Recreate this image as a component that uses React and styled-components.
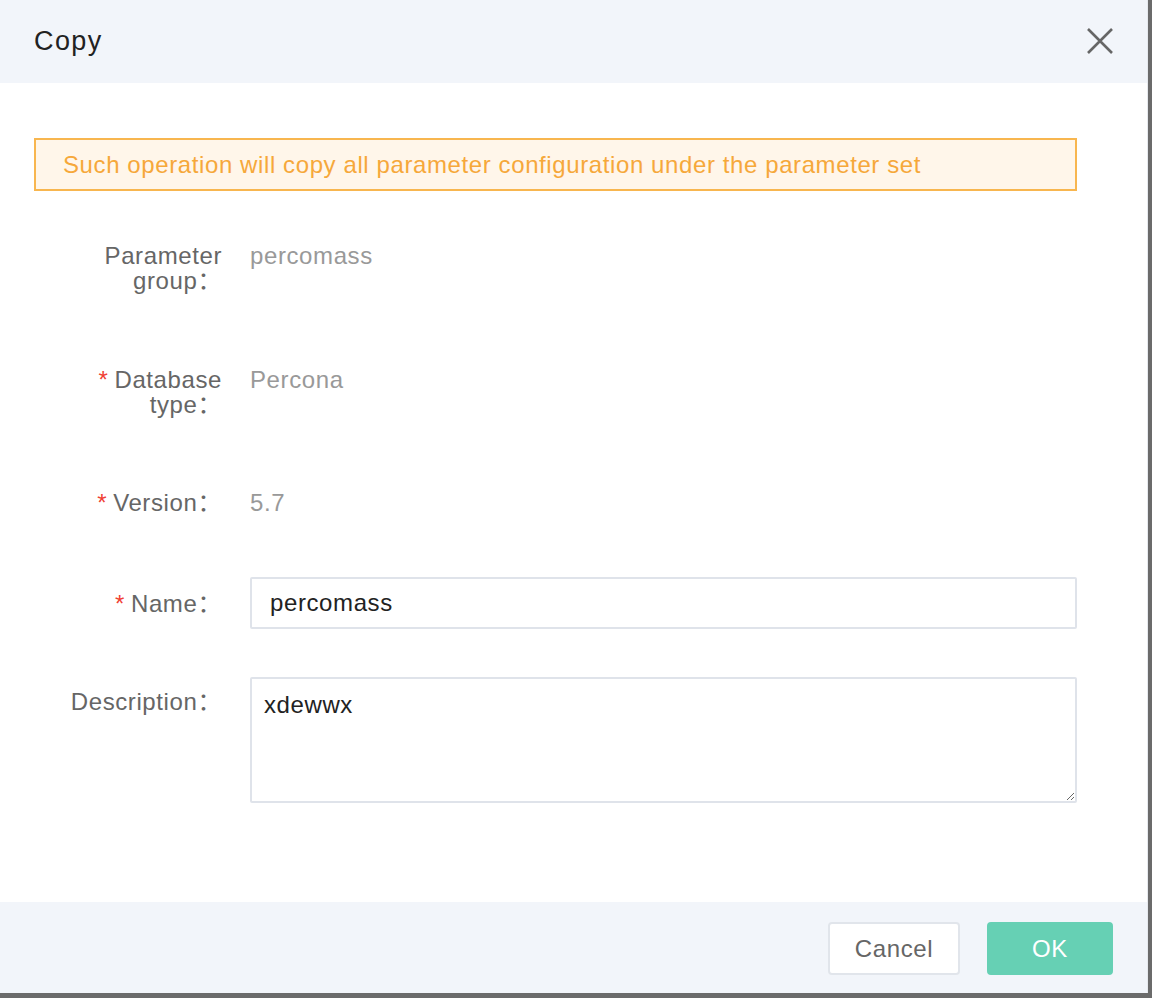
import styled, { createGlobalStyle } from 'styled-components';

const GlobalStyle = createGlobalStyle`
  html, body {
    margin: 0;
    padding: 0;
    background: #6b6b6b;
  }
  body {
    font-family: "Liberation Sans", Arial, "Noto Sans CJK SC", sans-serif;
  }
`;

const Dialog = styled.div`
  width: 1148px;
  height: 993px;
  background: #fff;
  display: flex;
  flex-direction: column;
  box-sizing: border-box;
  border-right: 1px solid #e6e9ee;
`;

const Header = styled.div`
  height: 83px;
  flex-shrink: 0;
  background: #f2f5fa;
  display: flex;
  align-items: center;
  justify-content: space-between;
  padding: 0 30px 0 34px;
  box-sizing: border-box;
`;

const Title = styled.h2`
  margin: 0;
  font-size: 27px;
  font-weight: 400;
  color: #222;
  letter-spacing: 1.4px;
`;

const CloseButton = styled.button`
  background: none;
  border: none;
  padding: 0;
  width: 34px;
  height: 34px;
  display: flex;
  align-items: center;
  justify-content: center;
  cursor: pointer;
  margin-top: -2px;
`;

const Body = styled.div`
  flex: 1;
  padding: 55px 70px 0 34px;
  font-size: 24px;
  letter-spacing: 0.6px;
`;

const Alert = styled.div`
  height: 53px;
  box-sizing: border-box;
  border: 2px solid #f8b64f;
  background: #fff6ea;
  color: #f6a83a;
  display: flex;
  align-items: center;
  padding: 0 27px;
  margin-bottom: 52px;
`;

const Row = styled.div`
  display: flex;
  align-items: ${p => (p.$center ? 'center' : 'flex-start')};
  margin-bottom: ${p => p.$gap}px;
  min-height: ${p => p.$h || 25}px;
`;

const Label = styled.div`
  width: 160px;
  flex-shrink: 0;
  text-align: right;
  line-height: 25px;
  color: #666;
  margin: 0 28px;
  padding-top: ${p => p.$top || 0}px;
`;

const Star = styled.span`
  color: #f04134;
  margin-right: 6px;
`;

const Value = styled.div`
  line-height: 25px;
  color: #999;
`;

const Input = styled.input`
  flex: 1;
  height: 52px;
  box-sizing: border-box;
  border: 2px solid #dfe3ea;
  border-radius: 2px;
  padding: 0 18px;
  font-family: inherit;
  font-size: 24px;
  letter-spacing: 0.6px;
  color: #222;
  outline: none;
`;

const TextArea = styled.textarea`
  flex: 1;
  height: 126px;
  box-sizing: border-box;
  border: 2px solid #dfe3ea;
  border-radius: 2px;
  padding: 12px 12px;
  font-family: inherit;
  font-size: 24px;
  letter-spacing: 0.6px;
  line-height: 28px;
  color: #222;
  outline: none;
  resize: vertical;
`;

const Footer = styled.div`
  height: 91px;
  flex-shrink: 0;
  background: #f2f5fa;
  display: flex;
  justify-content: flex-end;
  align-items: flex-start;
  gap: 27px;
  padding: 20px 34px 0 0;
  box-sizing: border-box;
`;

const Button = styled.button`
  height: 53px;
  width: ${p => p.$w}px;
  box-sizing: border-box;
  border-radius: 4px;
  font-family: inherit;
  font-size: 24px;
  letter-spacing: 0.6px;
  cursor: pointer;
  border: 2px solid ${p => (p.$primary ? '#66d0b4' : '#e1e5eb')};
  background: ${p => (p.$primary ? '#66d0b4' : '#fff')};
  color: ${p => (p.$primary ? '#fff' : '#666')};
`;

export default function App() {
  return (
    <>
      <GlobalStyle />
      <Dialog>
        <Header>
          <Title>Copy</Title>
          <CloseButton aria-label="close">
            <svg width="30" height="30" viewBox="0 0 30 30">
              <path d="M3 3 L27 27 M27 3 L3 27" stroke="#666" strokeWidth="2.6" fill="none" />
            </svg>
          </CloseButton>
        </Header>
        <Body>
          <Alert>Such operation will copy all parameter configuration under the parameter set</Alert>
          <Row $gap={74} $h={50}>
            <Label>Parameter group：</Label>
            <Value>percomass</Value>
          </Row>
          <Row $gap={73} $h={50}>
            <Label><Star>*</Star>Database type：</Label>
            <Value>Percona</Value>
          </Row>
          <Row $gap={62}>
            <Label><Star>*</Star>Version：</Label>
            <Value>5.7</Value>
          </Row>
          <Row $gap={48} $center>
            <Label><Star>*</Star>Name：</Label>
            <Input defaultValue="percomass" />
          </Row>
          <Row $gap={0}>
            <Label $top={12}>Description：</Label>
            <TextArea defaultValue="xdewwx" />
          </Row>
        </Body>
        <Footer>
          <Button $w={132}>Cancel</Button>
          <Button $w={126} $primary>OK</Button>
        </Footer>
      </Dialog>
    </>
  );
}
